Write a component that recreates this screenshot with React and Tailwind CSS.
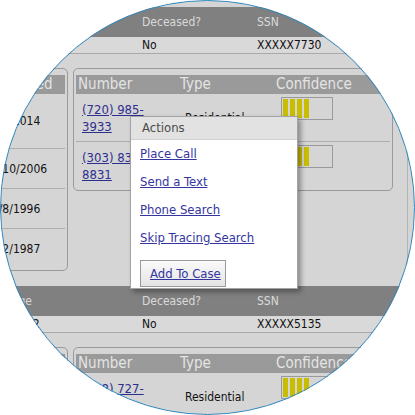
import React from 'react';

const font = "font-['DejaVu_Sans_Condensed','DejaVu_Sans',sans-serif]";

function Bars({ count }) {
  return (
    <div className="w-[52px] h-[23px] border border-[#9a9a9a] p-[1px] flex gap-[2px]">
      {Array.from({ length: count }).map((_, i) => (
        <div key={i} className="w-[5px] h-full bg-[#c9bd00]" />
      ))}
    </div>
  );
}

function PhoneRow({ line1, line2, type, bars, last }) {
  return (
    <div className={`flex items-start ${last ? 'h-[46px]' : 'h-[48px] border-b border-[#adadad]'}`}>
      <div className="w-[102px] pl-[6px] pt-[7px] text-[13px] leading-[17px]">
        <a href="#" className="text-[#2e2e8f] underline">
          {line1}
          <br />
          {line2}
        </a>
      </div>
      <div className="w-[96px] pl-[7px] self-center text-[12px] text-[#111]">{type}</div>
      <div className="pl-[7px] pt-[3px]">
        <Bars count={bars} />
      </div>
    </div>
  );
}

function Record({ age, deceased, ssn, dates, phones }) {
  return (
    <div>
      {/* record header */}
      <div className="flex h-[30px] items-center bg-[#808080] text-[12px] text-[#dadada]">
        <div className="w-[142px] pl-[11px]">Age</div>
        <div className="w-[115px]">Deceased?</div>
        <div>SSN</div>
      </div>
      <div className="flex h-[17px] items-center bg-[#d9d9d9] border-b border-[#a9a9a9] text-[12px] text-[#111]">
        <div className="w-[142px] pl-[26px]">{age}</div>
        <div className="w-[115px]">{deceased}</div>
        <div>{ssn}</div>
      </div>

      {/* cards */}
      <div className="flex items-start gap-[5px] mt-[14px] w-[408px] border-r border-[#b3b3b3]">
        <div className="-ml-[20px] w-[88px] shrink-0 border border-[#9a9a9a] rounded-[5px] pt-[6px] px-[2px] pb-[1px]">
          <div className="h-[19px] bg-[#9a9a9a] text-[15px] leading-[19px] text-[#e4e4e4] pl-[8px]">Reported</div>
          {dates.map((d, i) => (
            <div
              key={d}
              className={`flex items-center pl-[2px] text-[12px] text-[#111] ${i === 0 ? 'h-[55px]' : 'h-[40px]'} ${
                i < dates.length - 1 ? 'border-b border-[#adadad]' : ''
              }`}
            >
              {d}
            </div>
          ))}
        </div>

        <div className="w-[320px] shrink-0 border border-[#9a9a9a] rounded-[5px] pt-[6px] px-[2px] pb-[2px]">
          <div className="flex h-[19px] items-center bg-[#9a9a9a] text-[15px] text-[#e4e4e4]">
            <div className="w-[102px] pl-[2px]">Number</div>
            <div className="w-[96px] pl-[2px]">Type</div>
            <div className="pl-[2px]">Confidence</div>
          </div>
          {phones.map((p, i) => (
            <PhoneRow key={p.line1} {...p} last={i === phones.length - 1} />
          ))}
        </div>
      </div>
    </div>
  );
}

export default function App() {
  return (
    <div className={`w-[415px] h-[415px] bg-white ${font}`}>
      <div className="relative w-[415px] h-[415px] rounded-full overflow-hidden bg-[#d5d5d5]">
        <div className="pt-[7px]">
          <Record
            age="52"
            deceased="No"
            ssn="XXXXX7730"
            dates={['3/12/2014', '12/10/2006', '10/8/1996', '11/2/1987']}
            phones={[
              { line1: '(720) 985-', line2: '3933', type: 'Residential', bars: 4 },
              { line1: '(303) 834-', line2: '8831', type: 'Mobile', bars: 4 },
            ]}
          />
          <div className="mt-[15px]">
            <Record
              age="62"
              deceased="No"
              ssn="XXXXX5135"
              dates={['6/21/2015', '11/04/2009', '10/8/1999', '12/3/1990']}
              phones={[
                { line1: '(208) 727-', line2: '4410', type: 'Residential', bars: 4 },
                { line1: '(208) 731-', line2: '2206', type: 'Mobile', bars: 3 },
              ]}
            />
          </div>
        </div>

        {/* actions popup */}
        <div className="absolute left-[130px] top-[116px] w-[168px] h-[173px] border border-[#a3a3a3] bg-white shadow-[3px_3px_5px_rgba(0,0,0,0.35)]">
          <div className="h-[23px] flex items-center pl-[11px] bg-[#e2e2e2] border-b border-[#d0d0d0] text-[13px] text-[#4a4a4a]">
            Actions
          </div>
          {['Place Call', 'Send a Text', 'Phone Search', 'Skip Tracing Search'].map((t) => (
            <div key={t} className="h-[29px] flex items-center pl-[9px] -mt-[1px] first:mt-0">
              <a href="#" className="text-[13px] text-[#35359f] underline">
                {t}
              </a>
            </div>
          ))}
          <button className="ml-[9px] mt-[8px] w-[86px] h-[27px] border border-[#9a9a9a] bg-gradient-to-b from-[#fafafa] to-[#e4e4e4] text-left pl-[9px] text-[13px] text-[#35359f] underline">
            Add To Case
          </button>
        </div>

        {/* circle outline */}
        <div className="absolute inset-0 rounded-full border border-[#2c8bc3] pointer-events-none" />
      </div>
    </div>
  );
}
